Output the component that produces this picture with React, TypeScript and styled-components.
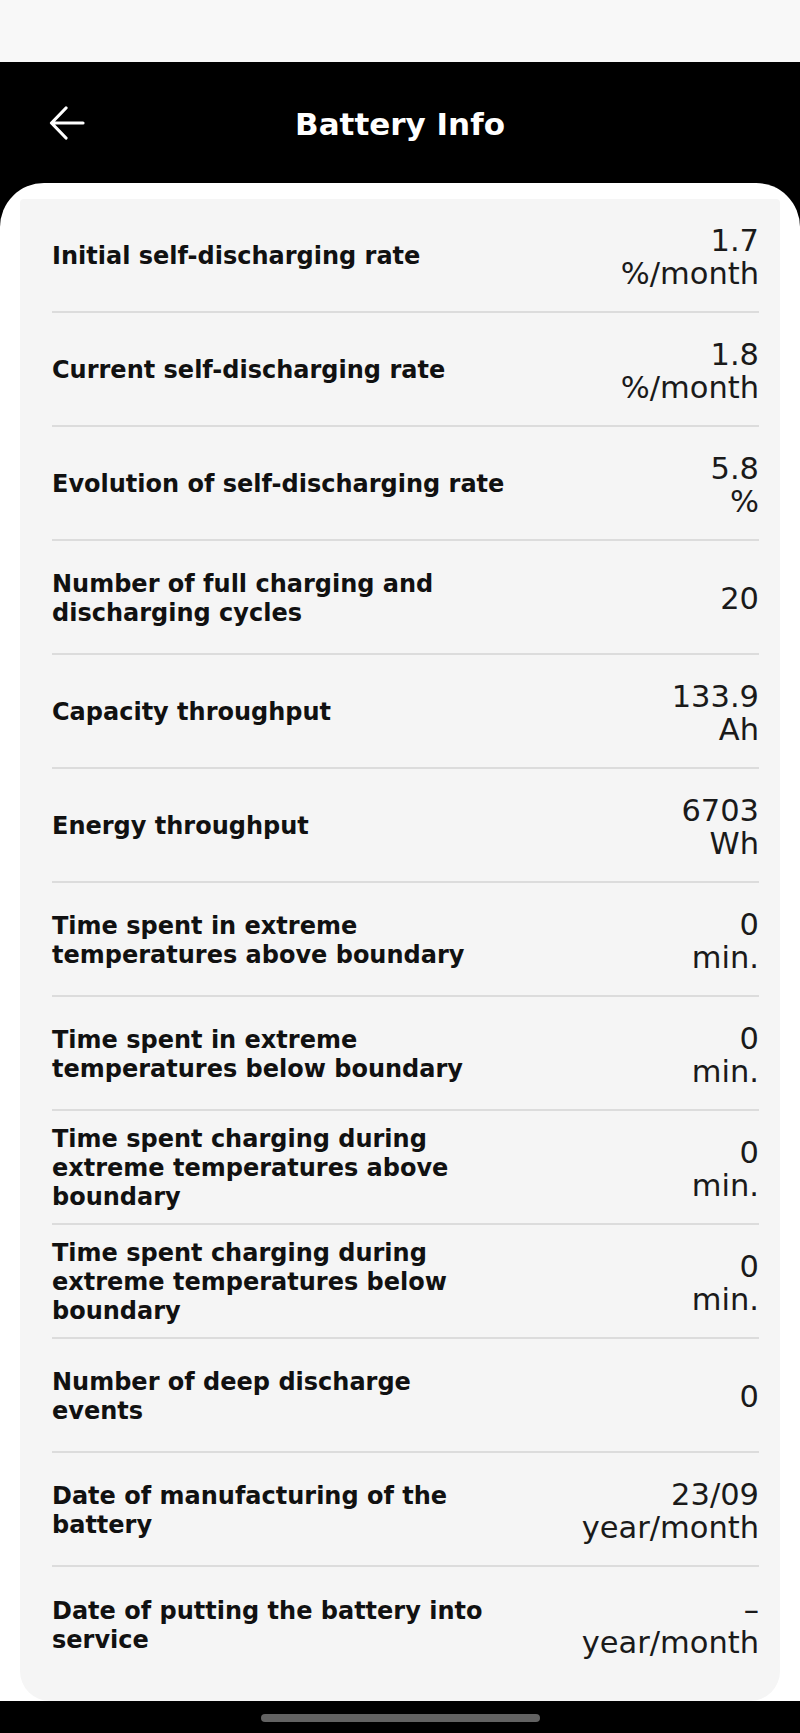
import React from 'react';
import styled, { createGlobalStyle } from 'styled-components';

interface Item {
  label: string;
  value: string;
  unit?: string;
}

const items: Item[] = [
  { label: 'Initial self-discharging rate', value: '1.7', unit: '%/month' },
  { label: 'Current self-discharging rate', value: '1.8', unit: '%/month' },
  { label: 'Evolution of self-discharging rate', value: '5.8', unit: '%' },
  { label: 'Number of full charging and discharging cycles', value: '20' },
  { label: 'Capacity throughput', value: '133.9', unit: 'Ah' },
  { label: 'Energy throughput', value: '6703', unit: 'Wh' },
  { label: 'Time spent in extreme temperatures above boundary', value: '0', unit: 'min.' },
  { label: 'Time spent in extreme temperatures below boundary', value: '0', unit: 'min.' },
  {
    label: 'Time spent charging during extreme temperatures above boundary',
    value: '0',
    unit: 'min.',
  },
  {
    label: 'Time spent charging during extreme temperatures below boundary',
    value: '0',
    unit: 'min.',
  },
  { label: 'Number of deep discharge events', value: '0' },
  { label: 'Date of manufacturing of the battery', value: '23/09', unit: 'year/month' },
  { label: 'Date of putting the battery into service', value: '–', unit: 'year/month' },
];

const GlobalStyle = createGlobalStyle`
  html, body {
    margin: 0;
    padding: 0;
    background: #000;
  }
  * {
    box-sizing: border-box;
  }
`;

const Screen = styled.div`
  width: 800px;
  min-height: 1733px;
  display: flex;
  flex-direction: column;
  background: #000;
  font-family: 'DejaVu Sans', 'Liberation Sans', sans-serif;
  color: #111;
`;

const StatusBar = styled.div`
  height: 62px;
  background: #f8f8f8;
`;

const Header = styled.header`
  height: 121px;
  display: flex;
  align-items: center;
  justify-content: center;
  position: relative;
  background: #000;
`;

const BackButton = styled.button`
  position: absolute;
  left: 47px;
  top: 43px;
  width: 40px;
  height: 36px;
  padding: 0;
  border: none;
  background: none;
  display: flex;
  align-items: center;
  justify-content: center;
`;

const Title = styled.h1`
  margin: 0;
  margin-top: 2px;
  font-family: 'DejaVu Sans', sans-serif;
  font-weight: 700;
  font-size: 31px;
  color: #fff;
`;

const Sheet = styled.main`
  flex: 1;
  background: #fff;
  border-radius: 44px 44px 0 0;
  padding: 16px 20px 0;
`;

const Card = styled.section`
  background: #f5f5f5;
  border-radius: 4px 4px 30px 30px;
  padding: 0 21px 20px 32px;
`;

const Row = styled.div`
  height: 114px;
  padding-top: 3px;
  display: flex;
  align-items: center;
  justify-content: space-between;
  border-bottom: 2px solid #dcdcdc;

  &:last-child {
    border-bottom: none;
  }
`;

const Label = styled.div`
  flex: 0 1 455px;
  font-weight: 700;
  font-size: 24px;
  line-height: 29px;
  color: #111;
`;

const Value = styled.div`
  text-align: right;
  font-weight: 400;
  font-size: 30.5px;
  line-height: 33px;
  color: #1a1a1a;
`;

const NavBar = styled.div`
  height: 33px;
  display: flex;
  align-items: center;
  justify-content: center;
  background: #000;
`;

const HomeIndicator = styled.div`
  width: 279px;
  height: 8px;
  border-radius: 4px;
  background: #626262;
`;

const BackArrow = () => (
  <svg width="36" height="34" viewBox="0 0 36 34" fill="none">
    <path
      d="M3 17H34M17 2L2.5 17L17 32"
      stroke="#fff"
      strokeWidth="3.2"
      strokeLinecap="round"
      strokeLinejoin="round"
    />
  </svg>
);

const App: React.FunctionComponent = () => {
  return (
    <Screen>
      <GlobalStyle />
      <StatusBar />
      <Header>
        <BackButton aria-label="Back">
          <BackArrow />
        </BackButton>
        <Title>Battery Info</Title>
      </Header>
      <Sheet>
        <Card>
          {items.map(item => (
            <Row key={item.label}>
              <Label>{item.label}</Label>
              <Value>
                <div>{item.value}</div>
                {item.unit && <div>{item.unit}</div>}
              </Value>
            </Row>
          ))}
        </Card>
      </Sheet>
      <NavBar>
        <HomeIndicator />
      </NavBar>
    </Screen>
  );
};

export default App;
